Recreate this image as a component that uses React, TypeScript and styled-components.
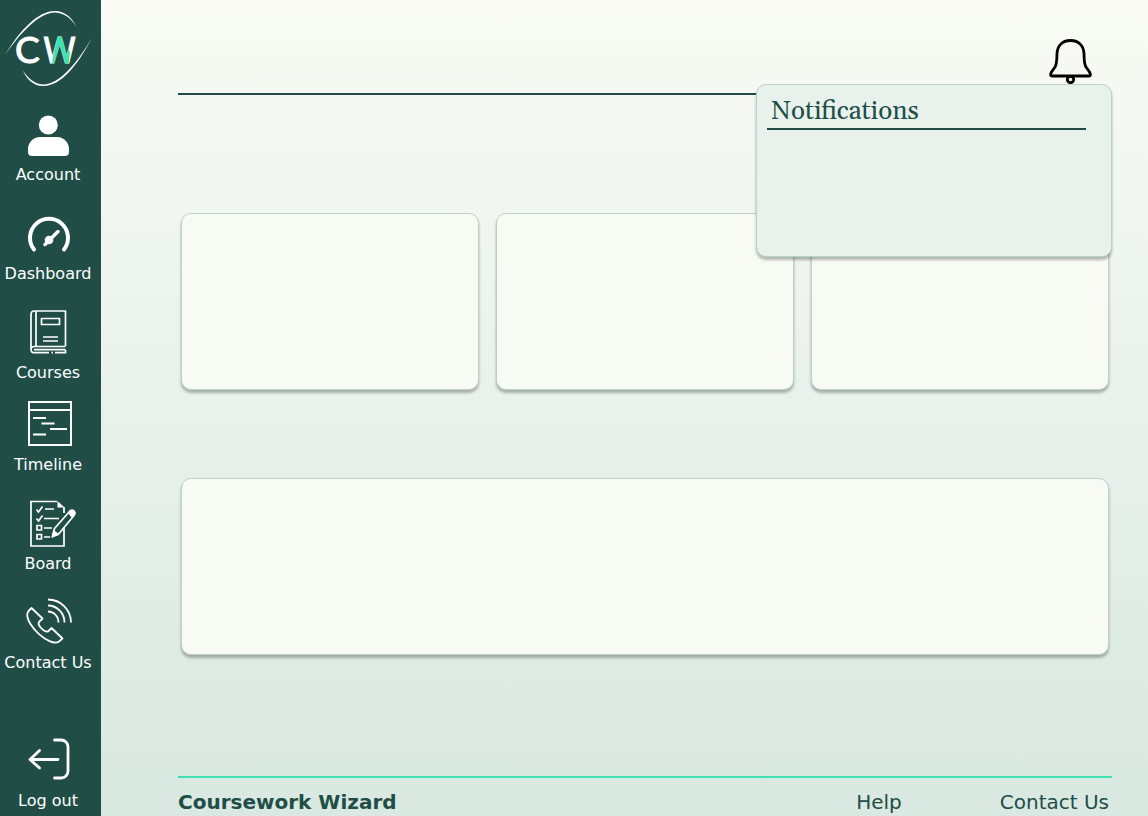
import React from "react";
import styled, { createGlobalStyle } from "styled-components";

const green = "#204e46";
const mint = "#3fe0b0";
const edge = "#b9d2cb";

const GlobalStyle = createGlobalStyle`
  * { box-sizing: border-box; }
  body {
    margin: 0;
    font-family: "DejaVu Sans", Verdana, sans-serif;
    color: ${green};
  }
`;

const Page = styled.div`
  display: flex;
  min-height: 100vh;
  background: linear-gradient(180deg, #f9fbf4 0%, #e9f1ec 50%, #d9e8e1 100%);
`;

const Sidebar = styled.aside`
  display: flex;
  flex-direction: column;
  flex: 0 0 101px;
  padding: 0 5px 5px 0;
  background: ${green};
`;

const LogoLink = styled.a`
  display: block;
  height: 108px;
`;

const Nav = styled.nav`
  display: flex;
  flex-direction: column;
`;

const NavItem = styled.a<{ $tight?: boolean }>`
  display: flex;
  flex-direction: column;
  align-items: center;
  gap: 9px;
  margin-bottom: ${(p) => (p.$tight ? 15 : 22)}px;
  color: #fff;
  font-size: 16px;
  line-height: 20px;
  text-decoration: none;
  white-space: nowrap;
`;

const LogOut = styled(NavItem)`
  margin-top: auto;
  margin-bottom: 0;
`;

const NavIcon = styled.svg`
  width: 56px;
  height: 48px;
  overflow: visible;
  fill: none;
  stroke: #fff;
  stroke-width: 2;
`;

const Main = styled.main`
  display: flex;
  flex-direction: column;
  flex: 1;
  min-width: 0;
  padding: 0 36px 0 77px;
`;

const Header = styled.header`
  position: relative;
  display: flex;
  justify-content: flex-end;
  padding: 38px 20px 9px;
  border-bottom: 2px solid ${green};
`;

const BellButton = styled.button`
  width: 44px;
  height: 46px;
  padding: 0;
  border: 0;
  background: none;
  cursor: pointer;
`;

const Card = styled.section`
  min-height: 177px;
  border: 1px solid ${edge};
  border-radius: 10px;
  background: #f8fbf4;
  box-shadow: 0 3px 3px rgba(0, 0, 0, 0.28);
`;

const Popover = styled(Card)`
  position: absolute;
  top: 84px;
  right: 0;
  width: 356px;
  min-height: 173px;
  padding: 11px 25px 9px 10px;
  background: #e8f1ec;
`;

const PopoverTitle = styled.h2`
  margin: 0;
  padding: 0 4px;
  border-bottom: 2px solid ${green};
  font-family: Gelasio, Georgia, "Liberation Serif", serif;
  font-size: 26px;
  line-height: 32px;
  font-weight: 400;
`;

const Cards = styled.div`
  display: grid;
  grid-template-columns: repeat(3, 1fr);
  gap: 88px 17px;
  margin: 118px 3px 40px;
`;

const WideCard = styled(Card)`
  grid-column: 1 / -1;
`;

const Footer = styled.footer`
  display: flex;
  align-items: center;
  gap: 98px;
  margin-top: auto;
  padding: 12px 3px 2px 0;
  border-top: 2px solid ${mint};
  font-size: 20px;
  line-height: 24px;
`;

const Brand = styled.strong`
  margin-right: auto;
`;

const FooterLink = styled.a`
  color: inherit;
  text-decoration: none;
`;

const LogoText = styled.text<{ $face: string }>`
  font-family: ${(p) => p.$face}, sans-serif;
  font-size: 37px;
  font-weight: 400;
  stroke-width: 1;
`;

function Logo() {
  return (
    <svg width="96" height="100" viewBox="0 0 96 100" role="img" aria-label="Coursework Wizard">
      <clipPath id="peak">
        <path d="M52 65L56 35H63L70 53L68 66H54.500Z" />
      </clipPath>
      <g fill="#fff">
        <path d="M5 55C20 30 38 11 55 11c9 0 17 6 21.500 16C71 18 64 13 55 12.500 39 13 22 31 5 55z" />
        <path d="M92 38C78 64 62 86 43 86c-9 0-16-6-20.500-16C28 78 34 84 43 84.500 60 84 76 64 92 38z" />
        <LogoText $face="Lato" x="15" y="63" stroke="#fff">C</LogoText>
        <LogoText $face="Roboto" x="43" y="63" stroke="#fff">W</LogoText>
      </g>
      <LogoText $face="Roboto" x="43" y="63" fill={mint} stroke={mint} clipPath="url(#peak)" aria-hidden="true">W</LogoText>
    </svg>
  );
}

const AccountIcon = () => (
  <NavIcon viewBox="20 108 56 48" aria-hidden="true">
    <g fill="#fff" stroke="none">
      <circle cx="48.300" cy="125" r="9.500" />
      <path d="M40 137h17c7 0 12 6 12 12v3c0 3-2 4-4 4H32c-2 0-4-1-4-4v-3c0-6 5-12 12-12z" />
    </g>
  </NavIcon>
);

const DashboardIcon = () => (
  <NavIcon viewBox="20 207 56 48" aria-hidden="true">
    <path d="M34 249.500A19 19 0 1 1 64 249.500" strokeWidth="4" strokeLinecap="round" />
    <path d="M45 244.500L58 231.500" strokeWidth="3.500" strokeLinecap="round" />
    <circle cx="49" cy="240" r="4.300" fill="#fff" stroke="none" />
  </NavIcon>
);

const CoursesIcon = () => (
  <NavIcon viewBox="20 306 56 48" aria-hidden="true" strokeLinejoin="round">
    <g strokeWidth="1.700">
      <path d="M65.500 346V311H34c-2 0-3 2-3 4v34c0 2 1 3.700 3 3.700h15M51.500 352.700h1.500M55 352.700h10.500V350M36 311v35M65.500 346.500H34c-2 0-3 1-3 3M65.500 349.700H34" />
      <rect x="41.500" y="318.500" width="18" height="6" />
      <path d="M43 337h15M43 341h15" />
    </g>
  </NavIcon>
);

const TimelineIcon = () => (
  <NavIcon viewBox="20 398 56 48" aria-hidden="true">
    <rect x="29" y="402" width="42" height="43" />
    <path d="M29 410h42M33 418h13M41.500 423.500h13M50 429h17M33 434.500h13" />
  </NavIcon>
);

const BoardIcon = () => (
  <NavIcon viewBox="20 497 56 48" aria-hidden="true">
    <g strokeWidth="1.700">
      <path d="M57 501.500H31V546h33v-19M64 507v6" />
      <path d="M57.500 501v6.500h7z" fill="#fff" stroke="none" />
      <path d="M36.500 509.500l2 2.500 4-5.500M36.500 518.500l2 2.500 4-5.500M45 509h9M44 518.500h15M44 528h8M44 537h6" />
      <path d="M37 525.500h4.500v4.500H37zM37 534.500h4.500v4.500H37z" />
      <path d="M52.500 536.500l2-8L69.500 511.500c2-3 7 1 4.500 4L59.500 533z" strokeLinejoin="round" />
      <path d="M52.500 536.500l1.500-5 4 3zM69 513l2-2c2-2 5 1 3 3.500l-2 2z" fill="#fff" />
    </g>
  </NavIcon>
);

const ContactIcon = () => (
  <NavIcon viewBox="20 596 56 48" aria-hidden="true">
    <path
      d="M31.500 608L42.500 618.500 39 622c-2 3 5 10.500 9 9.500l3.500-3.500L62.500 638.500 59 641.500c-9 6-33-16-31.700-27.500.200-2 2-4 4.200-6zM48 611.500c6 0 10.500 5 10.500 11M48 605.500c9 0 16.500 7.500 16.500 17M48 599.500c13 0 23 10.500 23 23"
      strokeWidth="1.800"
      strokeLinejoin="round"
    />
  </NavIcon>
);

const LogOutIcon = () => (
  <NavIcon viewBox="20 734 56 48" aria-hidden="true">
    <path
      d="M58 759.500H30M39.500 750.500L30 759.500l9.500 8.500M54.500 740H61c4 0 7 3 7 7v24c0 4-3 7-7 7h-6.500"
      strokeWidth="2.800"
      strokeLinecap="round"
      strokeLinejoin="round"
    />
  </NavIcon>
);

const navItems = [
  { label: "Account", Icon: AccountIcon },
  { label: "Dashboard", Icon: DashboardIcon },
  { label: "Courses", Icon: CoursesIcon, tight: true },
  { label: "Timeline", Icon: TimelineIcon },
  { label: "Board", Icon: BoardIcon },
  { label: "Contact Us", Icon: ContactIcon },
];

export default function App() {
  return (
    <>
      <GlobalStyle />
      <Page>
        <Sidebar>
          <LogoLink href="#home">
            <Logo />
          </LogoLink>
          <Nav>
            {navItems.map(({ label, Icon, tight }) => (
              <NavItem key={label} href="#" $tight={tight}>
                <Icon />
                {label}
              </NavItem>
            ))}
          </Nav>
          <LogOut href="#logout">
            <LogOutIcon />
            Log out
          </LogOut>
        </Sidebar>
        <Main>
          <Header>
            <BellButton type="button" aria-label="Notifications">
              <svg width="44" height="46" viewBox="1048 38 44 46" fill="none" stroke="#000" strokeWidth="2.800" strokeLinejoin="round">
                <path d="M1070.500 40.500c-9 0-13 6-13.500 13-.3 9 0 10-2 13.500l-3.500 5c-1.500 3-1 4 .500 4h37c1.500 0 2-1 .500-4l-3.500-5c-2-3.500-1.700-4.500-2-13.500-.5-7-4.500-13-13.500-13z" />
                <circle cx="1070.500" cy="79.500" r="3.200" />
              </svg>
            </BellButton>
            <Popover>
              <PopoverTitle>Notifications</PopoverTitle>
            </Popover>
          </Header>
          <Cards>
            <Card />
            <Card />
            <Card />
            <WideCard />
          </Cards>
          <Footer>
            <Brand>Coursework Wizard</Brand>
            <FooterLink href="#help">Help</FooterLink>
            <FooterLink href="#contact">Contact Us</FooterLink>
          </Footer>
        </Main>
      </Page>
    </>
  );
}
